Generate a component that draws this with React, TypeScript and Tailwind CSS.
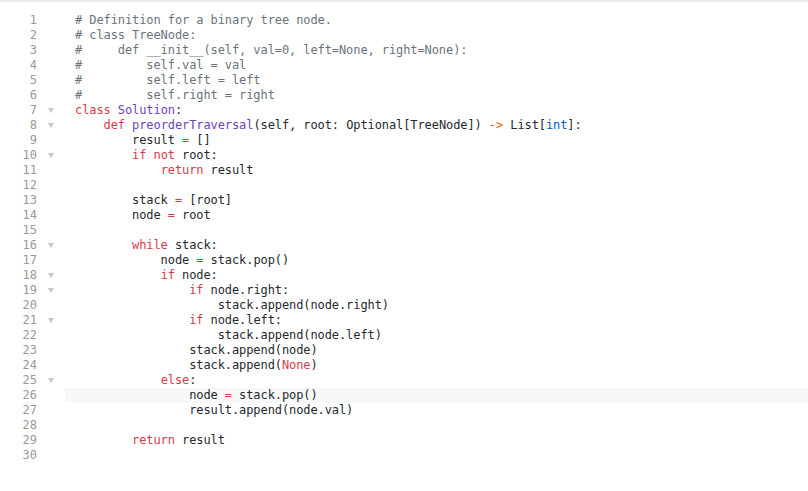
type Tok = [string, string?];

const K = "text-[#d73a49]"; // keyword
const C = "text-[#6a737d]"; // comment
const F = "text-[#6f42c1]"; // function / class name
const B = "text-[#005cc5]"; // builtin

const lines: { toks: Tok[]; fold?: boolean }[] = [
  { toks: [["# Definition for a binary tree node.", C]] },
  { toks: [["# class TreeNode:", C]] },
  { toks: [["#     def __init__(self, val=0, left=None, right=None):", C]] },
  { toks: [["#         self.val = val", C]] },
  { toks: [["#         self.left = left", C]] },
  { toks: [["#         self.right = right", C]] },
  { fold: true, toks: [["class", K], [" "], ["Solution", F], [":"]] },
  {
    fold: true,
    toks: [
      ["    "],
      ["def", K],
      [" "],
      ["preorderTraversal", F],
      ["(self, root: Optional[TreeNode]) "],
      ["->", "text-[#e36209]"],
      [" List["],
      ["int", B],
      ["]:"],
    ],
  },
  { toks: [["        result "], ["=", K], [" []"]] },
  { fold: true, toks: [["        "], ["if", K], [" "], ["not", K], [" root:"]] },
  { toks: [["            "], ["return", K], [" result"]] },
  { toks: [[""]] },
  { toks: [["        stack "], ["=", K], [" [root]"]] },
  { toks: [["        node "], ["=", K], [" root"]] },
  { toks: [[""]] },
  { fold: true, toks: [["        "], ["while", K], [" stack:"]] },
  { toks: [["            node "], ["=", K], [" stack.pop()"]] },
  { fold: true, toks: [["            "], ["if", K], [" node:"]] },
  { fold: true, toks: [["                "], ["if", K], [" node.right:"]] },
  { toks: [["                    stack.append(node.right)"]] },
  { fold: true, toks: [["                "], ["if", K], [" node.left:"]] },
  { toks: [["                    stack.append(node.left)"]] },
  { toks: [["                stack.append(node)"]] },
  { toks: [["                stack.append("], ["None", K], [")"]] },
  { fold: true, toks: [["            "], ["else", K], [":"]] },
  { toks: [["                node "], ["=", K], [" stack.pop()"]] },
  { toks: [["                result.append(node.val)"]] },
  { toks: [[""]] },
  { toks: [["        "], ["return", K], [" result"]] },
  { toks: [[""]] },
];

export default function App() {
  return (
    <main className="min-h-screen w-[808px] h-[491px] bg-white border-t-2 border-[#ececec] pt-[11px] overflow-hidden">
      <div className="font-['DejaVu_Sans_Mono',monospace] text-[12px] leading-[15px] text-[#24292e]">
        {lines.map((l, i) => (
          <div key={i} className="flex h-[15px]">
            <div className="w-[65px] flex shrink-0">
              <span className="w-[37px] text-right text-[#999999]">{i + 1}</span>
              <span className="w-[28px] flex items-center justify-center">
                {l.fold && (
                  <svg width="6" height="5" viewBox="0 0 6 5">
                    <path d="M0 0h6L3 5z" fill="#c8c8c8" />
                  </svg>
                )}
              </span>
            </div>
            <div
              className={
                "flex-1 pl-[10px] whitespace-pre tracking-[-0.09px] " + (i === 25 ? "bg-[#f7f8fa]" : "")
              }
            >
              {l.toks.map(([t, c], j) => (
                <span key={j} className={c}>
                  {t}
                </span>
              ))}
            </div>
          </div>
        ))}
      </div>
    </main>
  );
}
